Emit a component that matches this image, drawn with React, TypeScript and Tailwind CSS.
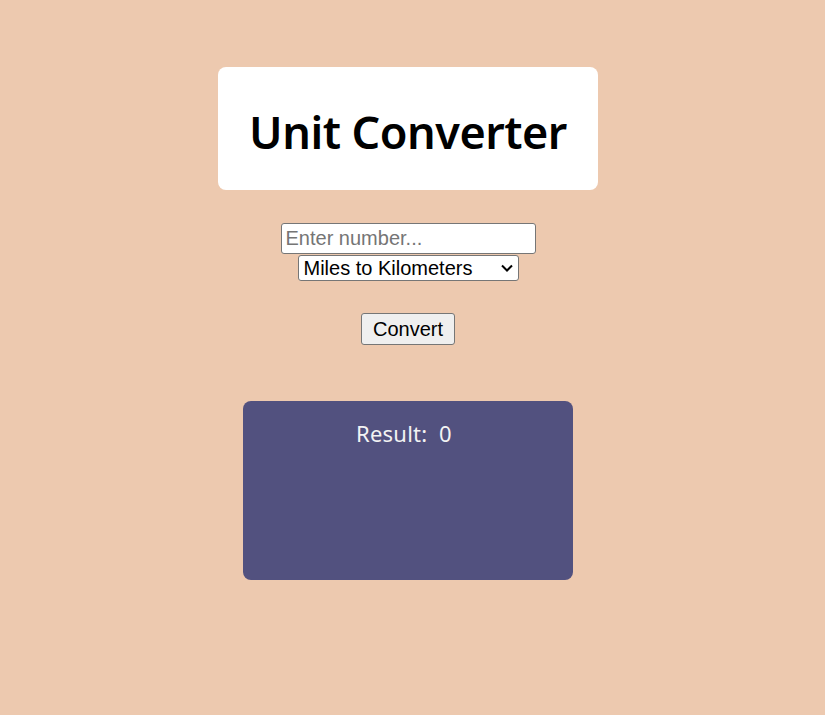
const App = () => {
  return (
    <div className="min-h-[715px] bg-[#edc9af] font-['Noto_Sans',sans-serif]">
      <div className="flex w-[816px] flex-col items-center pt-[67px]">
        <div className="flex h-[123px] w-[380px] items-center justify-center rounded-lg bg-white pt-[6px]">
          <h1 className="text-[45px] font-semibold tracking-[-0.5px] text-black">Unit Converter</h1>
        </div>
        <div className="mt-[33px] flex flex-col items-center font-['Liberation_Sans',sans-serif]">
          <input
            type="text"
            placeholder="Enter number..."
            className="h-[31px] w-[255px] rounded-[3px] border border-[#767676] bg-white px-[4px] text-[20px] text-black placeholder:text-[#757575]"
          />
          <div className="relative mt-[1px] flex">
            <select className="h-[26px] w-[221px] appearance-none rounded-[3px] border border-[#767676] bg-white pl-[5px] text-[20px] leading-[24px] text-black">
              <option>Miles to Kilometers</option>
            </select>
            <svg
              className="pointer-events-none absolute right-[5px] top-[8px]"
              width="14"
              height="10"
              viewBox="0 0 14 10"
              fill="none"
            >
              <path d="M2 2.5 L7 7.5 L12 2.5" stroke="#000" strokeWidth="2" />
            </svg>
          </div>
          <button className="mt-[32px] h-[32px] w-[94px] rounded-[3px] border border-[#767676] bg-[#efefef] text-[20px] text-black">
            Convert
          </button>
        </div>
        <div className="mt-[56px] flex h-[179px] w-[330px] justify-center rounded-lg bg-[#52517f] pt-[16px]">
          <p className="whitespace-pre pr-[8px] text-[22px] tracking-[0.2px] text-[#f3f3f3]">Result:  0</p>
        </div>
      </div>
    </div>
  )
}

export default App
